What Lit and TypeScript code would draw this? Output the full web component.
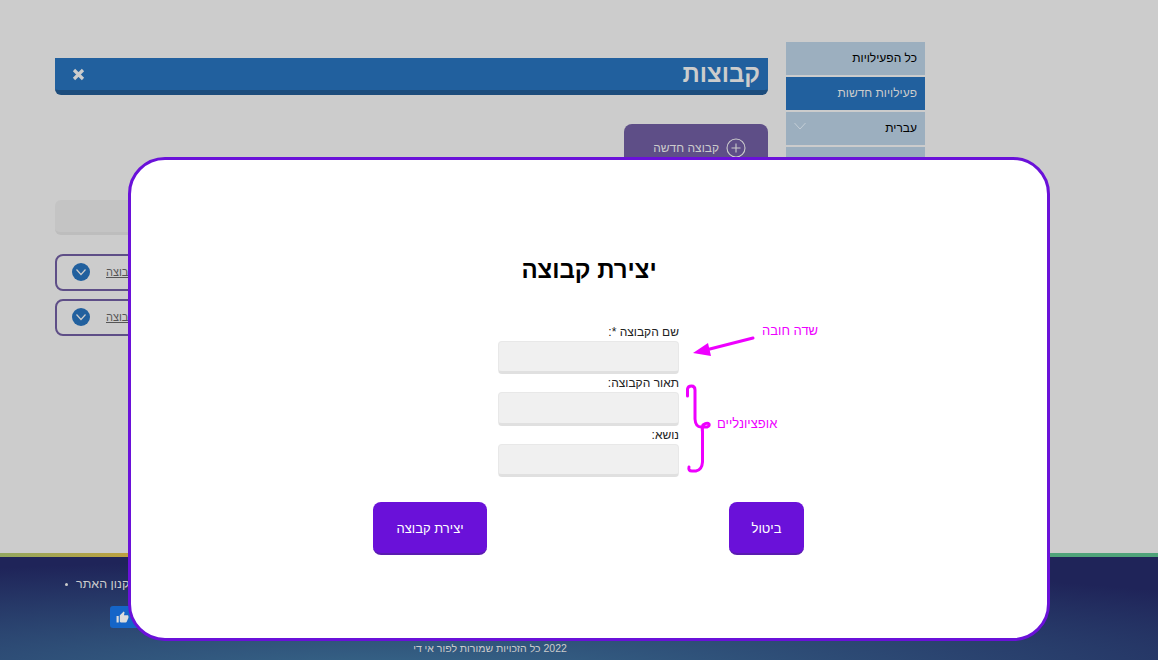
import { LitElement, html, css } from "lit";
import { customElement } from "lit/decorators.js";

const chevron = html`<svg class="chev" viewBox="0 0 18 18" width="18" height="18"><circle cx="9" cy="9" r="9" fill="#21609e"/><path d="M4.500 6.500 9 11.500l4.500-5" fill="none" stroke="#ccc" stroke-width="1.200"/></svg>`;

@customElement("app-root")
export class AppRoot extends LitElement {
  static styles = css`
    :host { display: block; position: relative; width: 1158px; height: 660px; overflow: hidden; background: #ccc; font-family: "Liberation Sans", Arial, sans-serif; font-size: 12px; }
    * { box-sizing: border-box; }
    .main { height: 553px; display: flex; gap: 18px; padding: 42px 233px 0 55px; }
    .side { width: 139px; flex: none; display: flex; flex-direction: column; gap: 2px; }
    .side a { height: 33px; display: flex; align-items: center; justify-content: space-between; padding: 0 8px 2px; background: #9cafbf; color: #000; font-size: 12px; }
    .side a.active { background: #21609e; color: #ccc; }
    .side svg { margin-top: -4px; }
    .content { flex: 1; display: flex; flex-direction: column; padding-top: 16px; }
    .bar { height: 37px; background: #21609e; border-bottom: 5px solid #1c4c7c; border-radius: 0 0 6px 6px; display: flex; align-items: center; justify-content: space-between; padding: 0 8px 0 17px; color: #ccc; }
    .bar h1 { margin: 0; font-size: 24px; font-weight: bold; line-height: 30px; }
    .close { width: 13px; height: 13px; display: block; }
    .newbtn { align-self: flex-start; margin-top: 29px; width: 144px; height: 48px; background: #5e4e87; color: #ccc; border-radius: 8px; display: flex; align-items: center; gap: 7px; padding: 0 22px 0 0; font-size: 12px; }
    .search { margin-top: 28px; height: 35px; background: #c4c4c4; border-bottom: 3px solid #bdbdbd; border-radius: 6px; }
    .row { height: 37px; border: 2px solid #5e4e87; border-radius: 8px; display: flex; align-items: center; justify-content: flex-end; gap: 16px; padding: 0 0 1px 15px; color: #555; font-size: 11px; }
    .row span { text-decoration: underline; }
    .row.first { margin-top: 19px; }
    .row.second { margin-top: 8px; }
    .stripe { height: 4px; background: linear-gradient(to right, #93a75f, #bda13f 130px, #bda13f 400px, #4fa37a 1050px); }
    .footer { height: 103px; position: relative; background: radial-gradient(ellipse 1100px 112px at 400px 115px, #376789, #1f2459); color: #ccc; }
    .terms { display: flex; align-items: center; gap: 8px; padding: 19px 0 0 65px; direction: ltr; font-size: 12.5px; line-height: 16px; }
    .dot { width: 3px; height: 3px; border-radius: 50%; background: #ccc; }
    .like { margin: 14px 0 0 110px; width: 60px; height: 22px; border-radius: 3px; background: #1565c8; display: flex; align-items: center; padding-left: 6px; }
    .copy { position: absolute; left: 0; bottom: 4px; width: 980px; text-align: center; font-size: 10.5px; line-height: 16px; }
    .overlay { position: absolute; left: 128px; top: 157px; width: 922px; height: 484px; background: #fff; border: 3px solid #6a11d9; border-radius: 37px; display: flex; flex-direction: column; align-items: center; padding-top: 95px; }
    .modal-title { margin: 0; font-size: 24px; line-height: 30px; font-weight: bold; color: #000; }
    form { width: 181px; margin: 38px 1px 0 0; display: flex; flex-direction: column; }
    label { height: 18px; line-height: 18px; font-size: 12px; color: #222; }
    .input { height: 33px; background: #f0f0f0; border: 1px solid #e8e8e8; border-bottom: 3px solid #e0e0e0; border-radius: 4px; }
    .input.tall { height: 34px; }
    .actions { width: 431px; margin: 25px 1px 0 0; display: flex; justify-content: space-between; }
    .btn { height: 53px; padding: 1px 23.500px 0; background: #6a11d9; color: #fff; border-radius: 8px; border-bottom: 2px solid #5a1bb0; font-size: 13px; display: flex; align-items: center; }
    .btn.cancel { padding: 1px 22.500px 0; }
    .marks { position: absolute; left: 0; top: 0; pointer-events: none; }
    .note { position: absolute; color: #ee00ff; font-size: 13px; line-height: 16px; white-space: nowrap; }
    .note.req { left: 631px; top: 163px; }
    .note.opt { left: 586px; top: 256px; }
  `;

  render() {
    return html`
      <div class="main" dir="rtl">
        <nav class="side">
          <a>כל הפעילויות</a>
          <a class="active">פעילויות חדשות</a>
          <a>עברית<svg viewBox="0 0 12 8" width="12" height="8"><path d="M.5 1 6 7l5.500-6" fill="none" stroke="#c4ced6" stroke-width="1"/></svg></a>
          <a></a>
        </nav>
        <section class="content">
          <div class="bar">
            <h1>קבוצות</h1>
            <svg class="close" viewBox="0 0 13 13"><path d="M2 2l9 9M11 2l-9 9" stroke="#ccc" stroke-width="3.200" fill="none"/></svg>
          </div>
          <div class="newbtn">
            <svg viewBox="0 0 20 20" width="20" height="20"><circle cx="10" cy="10" r="9" fill="none" stroke="#ccc" stroke-width="1.100"/><path d="M10 5.500v9M5.500 10h9" stroke="#ccc" stroke-width="1.100"/></svg>
            קבוצה חדשה
          </div>
          <div class="search"></div>
          <div class="row first"><span>קבוצה</span>${chevron}</div>
          <div class="row second"><span>קבוצה</span>${chevron}</div>
        </section>
      </div>
      <div class="stripe"></div>
      <footer class="footer">
        <div class="terms"><span class="dot"></span><span dir="rtl">תקנון האתר</span></div>
        <div class="like"><svg viewBox="0 0 24 24" width="13" height="13"><path fill="#ddd" d="M1 21h4V9H1v12zm22-11c0-1.100-.9-2-2-2h-6.300l1-4.600v-.3c0-.4-.2-.8-.4-1.100L14.200 1 7.600 7.600C7.200 8 7 8.500 7 9v10c0 1.100.9 2 2 2h9c.8 0 1.500-.5 1.800-1.200l3-7.100c.1-.2.200-.5.200-.7v-2z"/></svg></div>
        <div class="copy" dir="rtl">2022 כל הזכויות שמורות לפור אי די</div>
      </footer>
      <div class="overlay" dir="rtl">
        <h2 class="modal-title">יצירת קבוצה</h2>
        <form>
          <label>שם הקבוצה *:</label>
          <div class="input"></div>
          <label>תאור הקבוצה:</label>
          <div class="input tall"></div>
          <label>נושא:</label>
          <div class="input"></div>
        </form>
        <div class="actions">
          <div class="btn cancel">ביטול</div>
          <div class="btn">יצירת קבוצה</div>
        </div>
        <svg class="marks" width="916" height="478" viewBox="131 160 916 478">
          <g fill="none" stroke="#ee00ff" stroke-width="3" stroke-linecap="round" stroke-linejoin="round">
            <path d="M753 338 702 351"/>
            <path d="M687.500 396V389Q688 386 691.500 386 695 386 695 390V419Q695.500 427 701 427H707Q710 426 709 424 707 422 703 425 702 427 702.500 432V462Q702 470 696 471H692Q688 471 689 467"/>
          </g>
          <path d="M693 353 708 343 711 356Z" fill="#ee00ff"/>
        </svg>
        <div class="note req">שדה חובה</div>
        <div class="note opt">אופציונליים</div>
      </div>
    `;
  }
}
